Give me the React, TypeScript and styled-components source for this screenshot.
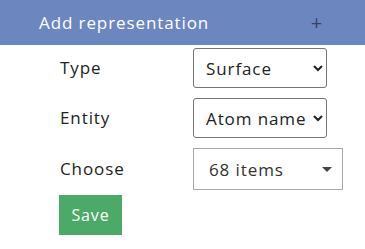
import styled, { createGlobalStyle } from 'styled-components'

const GlobalStyle = createGlobalStyle`
  body {
    margin: 0;
    background: #fff;
    font-family: 'Open Sans', 'Liberation Sans', sans-serif;
    letter-spacing: 0.9px;
  }
`

const Panel = styled.div`
  width: 365px;
`

const Header = styled.div`
  display: flex;
  align-items: center;
  justify-content: space-between;
  height: 45px;
  padding: 0 42px 0 39px;
  background-color: #6c87bf;
  color: #fff;
  font-size: 17px;
`

const Plus = styled.span`
  color: #34435f;
  font-size: 20px;
  line-height: 1;
`

const Form = styled.div`
  display: grid;
  grid-template-columns: 133px auto;
  row-gap: 10px;
  align-items: center;
  padding: 3px 0 0 60px;
  color: #222;
  font-size: 17px;
`

const Label = styled.label`
  margin-top: -2px;
`

const Select = styled.select`
  display: block;
  width: 134px;
  height: 40px;
  padding: 0 4px 0 8px;
  border: 1px solid #767676;
  border-radius: 3px;
  background: #fff;
  color: #222;
  font-family: inherit;
  font-size: 17px;
  letter-spacing: 0.9px;
`

const MultiSelect = styled.div`
  display: flex;
  align-items: center;
  justify-content: space-between;
  width: 150px;
  height: 42px;
  box-sizing: border-box;
  padding: 0 10px 0 15px;
  border: 1px solid #aaa;
  font-size: 17px;
  color: #333;
`

const Caret = styled.span`
  width: 0;
  height: 0;
  border-left: 5px solid transparent;
  border-right: 5px solid transparent;
  border-top: 5px solid #444;
`

const SaveButton = styled.button`
  display: block;
  margin: 5px 0 0 59px;
  width: 63px;
  height: 40px;
  border: none;
  background-color: #4caa69;
  color: #fff;
  font-family: inherit;
  font-size: 16px;
  letter-spacing: 0.9px;
`

export default function App() {
  return (
    <Panel>
      <GlobalStyle />
      <Header>
        <span>Add representation</span>
        <Plus>+</Plus>
      </Header>
      <Form>
        <Label>Type</Label>
        <div>
          <Select defaultValue='surface'>
            <option value='surface'>Surface</option>
            <option value='cartoon'>Cartoon</option>
          </Select>
        </div>
        <Label>Entity</Label>
        <div>
          <Select defaultValue='atom'>
            <option value='atom'>Atom name</option>
            <option value='residue'>Residue</option>
          </Select>
        </div>
        <Label>Choose</Label>
        <MultiSelect>
          <span>68 items</span>
          <Caret />
        </MultiSelect>
      </Form>
      <SaveButton>Save</SaveButton>
    </Panel>
  )
}
